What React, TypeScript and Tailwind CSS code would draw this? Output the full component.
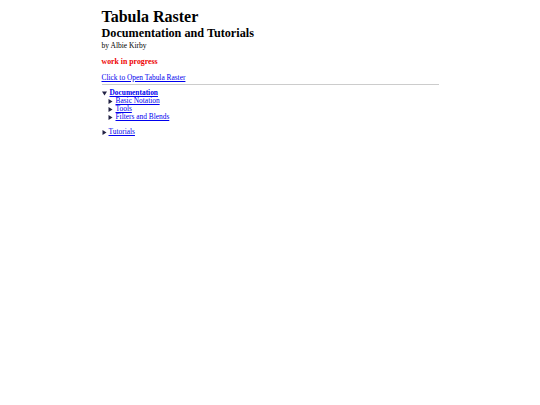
import {FC} from "react";

const serif = "font-['Liberation_Serif','Times_New_Roman',serif]";

const Arrow: FC<{open?: boolean; slot?: string}> = ({open, slot = "w-[8px]"}) => (
    <span className={`inline-flex ${slot} h-[8px] items-center shrink-0`}>
        <svg width="5" height="5" viewBox="0 0 10 10">
            {open
                ? <polygon points="0,1 10,1 5,9" fill="#222244" />
                : <polygon points="1,0 9,5 1,10" fill="#222244" />}
        </svg>
    </span>
);

const App: FC = () => {
    return (
        <div className={`min-h-screen bg-white text-black ${serif}`}>
            <div className="w-[337px] mx-auto pt-[8px]">
                <h1 className="text-[16px] leading-[18px] font-bold">Tabula Raster</h1>
                <h2 className="text-[12.2px] leading-[14px] font-bold">Documentation and Tutorials</h2>
                <p className="text-[7.5px] leading-[9px] mt-[1px]">by Albie Kirby</p>

                <p className="text-[7.8px] leading-[9px] font-bold text-[#ee0000] mt-[7px]">work in progress</p>

                <p className="text-[7.4px] leading-[9px] mt-[7px]">
                    <a href="#" className="text-[#0000ee] underline">Click to Open Tabula Raster</a>
                </p>
                <hr className="border-t border-[#cccccc] mt-[2px] mb-[4px]" />

                {/* table of contents */}
                <div className="text-[7.4px] leading-[8px]">
                    <div className="flex h-[8px]">
                        <Arrow open />
                        <a href="#" className="text-[#0000ee] underline font-bold">Documentation</a>
                    </div>
                    <div className="pl-[6px]">
                        <div className="flex h-[8px]">
                            <Arrow />
                            <a href="#" className="text-[#0000ee] underline">Basic Notation</a>
                        </div>
                        <div className="flex h-[8px]">
                            <Arrow />
                            <a href="#" className="text-[#0000ee] underline">Tools</a>
                        </div>
                        <div className="flex h-[8px]">
                            <Arrow />
                            <a href="#" className="text-[#0000ee] underline">Filters and Blends</a>
                        </div>
                    </div>
                    <div className="flex h-[8px] mt-[7px]">
                        <Arrow slot="w-[7px]" />
                        <a href="#" className="text-[#0000ee] underline">Tutorials</a>
                    </div>
                </div>
            </div>
        </div>
    );
};

export default App;
